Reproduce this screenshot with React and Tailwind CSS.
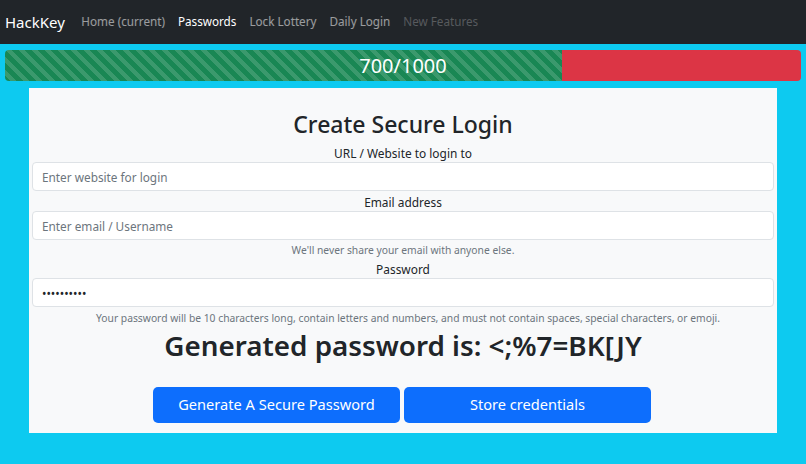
export default function App() {
  const navLinks = [
    { label: 'Home (current)', cls: 'text-white/55' },
    { label: 'Passwords', cls: 'text-white' },
    { label: 'Lock Lottery', cls: 'text-white/55' },
    { label: 'Daily Login', cls: 'text-white/55' },
    { label: 'New Features', cls: 'text-white/25' },
  ];

  const inputCls =
    'block w-full h-[29px] rounded-[4px] border border-[#dee2e6] bg-white px-[9px] text-[11.8px] text-[#212529] placeholder:text-[#6c757d] outline-none';

  return (
    <div className="min-h-[464px] bg-[#0dcaf0] font-['Noto_Sans',sans-serif] text-[#212529]">
      {/* navbar */}
      <nav className="h-[44px] bg-[#212529] flex items-center px-[5px]">
        <span className="text-white text-[15px] mr-[10px]">HackKey</span>
        <div className="flex">
          {navLinks.map(({ label, cls }) => (
            <span key={label} className={`text-[11.7px] px-[6.5px] ${cls}`}>{label}</span>
          ))}
        </div>
      </nav>

      {/* progress */}
      <div className="px-[5px] pt-[6px]">
        <div className="relative h-[31px] flex rounded-[4px] overflow-hidden">
          <div className="w-[70%] bg-[#198754] bg-[linear-gradient(45deg,rgba(255,255,255,.15)_25%,transparent_25%,transparent_50%,rgba(255,255,255,.15)_50%,rgba(255,255,255,.15)_75%,transparent_75%,transparent)] bg-[length:13px_13px]" />
          <div className="flex-1 bg-[#dc3545]" />
          <span className="absolute inset-0 flex items-center justify-center text-white text-[20px]">700/1000</span>
        </div>
      </div>

      {/* card */}
      <div className="mx-[29px] mt-[7px] w-[748px] h-[345px] bg-[#f8f9fa] px-[3px] pt-[21px] text-center">
        <h2 className="text-[23px] font-medium leading-[30px] mb-[5px]">Create Secure Login</h2>

        <label className="block text-[11.9px] leading-[18px]">URL / Website to login to</label>
        <input className={inputCls} placeholder="Enter website for login" />

        <label className="block text-[11.9px] leading-[18px] mt-[2px]">Email address</label>
        <input className={inputCls} placeholder="Enter email / Username" />
        <p className="text-[10.3px] text-[#6c757d] leading-[17px] mt-[2px]">We'll never share your email with anyone else.</p>

        <label className="block text-[11.9px] leading-[18px] mt-[1px]">Password</label>
        <input type="password" readOnly value="aaaaaaaaaa" className={inputCls} />
        <p className="text-[10.3px] text-[#6c757d] leading-[17px] mt-[3px] pl-[10px]">
          Your password will be 10 characters long, contain letters and numbers, and must not contain spaces, special characters, or emoji.
        </p>

        <h1 className="text-[27.8px] font-semibold leading-[34px] mt-[1px]">Generated password is: &lt;;%7=BK[JY</h1>

        <div className="flex justify-center gap-[4px] mt-[25px] pr-[2px]">
          <button className="w-[247px] h-[36px] rounded-[5px] bg-[#0d6efd] text-white text-[14.6px]">Generate A Secure Password</button>
          <button className="w-[247px] h-[36px] rounded-[5px] bg-[#0d6efd] text-white text-[14.6px]">Store credentials</button>
        </div>
      </div>
    </div>
  );
}
